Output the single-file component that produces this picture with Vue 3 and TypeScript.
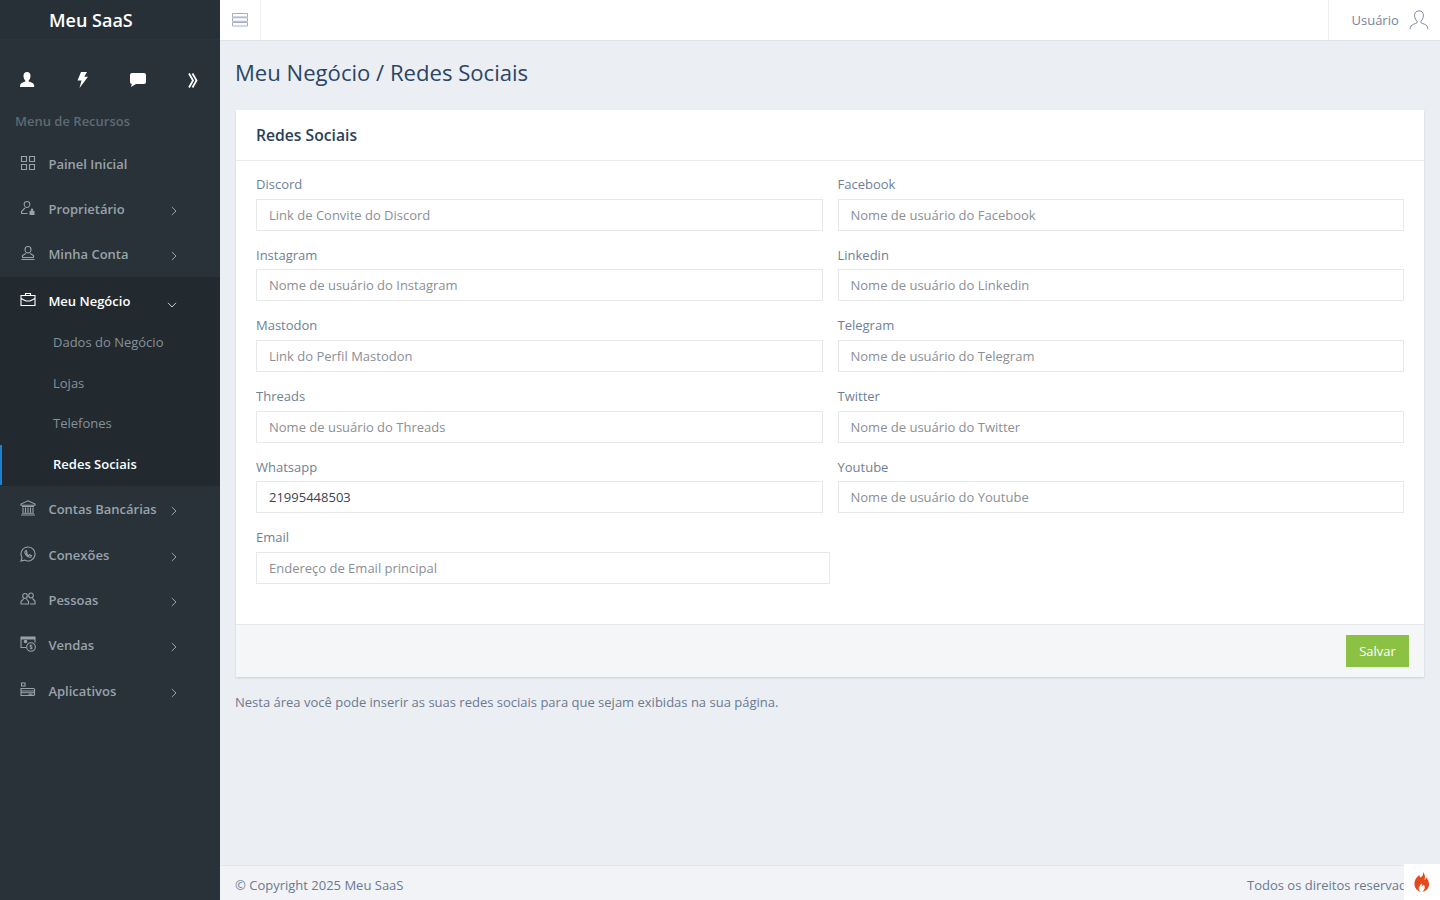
<script setup lang="ts">
interface Field { label: string; placeholder: string; value?: string }
const fields: Field[] = [
  { label: 'Discord', placeholder: 'Link de Convite do Discord' },
  { label: 'Facebook', placeholder: 'Nome de usuário do Facebook' },
  { label: 'Instagram', placeholder: 'Nome de usuário do Instagram' },
  { label: 'Linkedin', placeholder: 'Nome de usuário do Linkedin' },
  { label: 'Mastodon', placeholder: 'Link do Perfil Mastodon' },
  { label: 'Telegram', placeholder: 'Nome de usuário do Telegram' },
  { label: 'Threads', placeholder: 'Nome de usuário do Threads' },
  { label: 'Twitter', placeholder: 'Nome de usuário do Twitter' },
  { label: 'Whatsapp', placeholder: '', value: '21995448503' },
  { label: 'Youtube', placeholder: 'Nome de usuário do Youtube' }
]
const menuTop = [
  { name: 'Painel Inicial', icon: 'grid', arrow: false },
  { name: 'Proprietário', icon: 'userlock', arrow: true },
  { name: 'Minha Conta', icon: 'user', arrow: true }
]
const menuBottom = [
  { name: 'Contas Bancárias', icon: 'bank', arrow: true },
  { name: 'Conexões', icon: 'whats', arrow: true },
  { name: 'Pessoas', icon: 'people', arrow: true },
  { name: 'Vendas', icon: 'money', arrow: true },
  { name: 'Aplicativos', icon: 'apps', arrow: true }
]
const subs = ['Dados do Negócio', 'Lojas', 'Telefones', 'Redes Sociais']
const paths: Record<string, string> = {
  grid: 'M1.500 1.500h5v5h-5zM9.500 1.500h5v5h-5zM1.500 9.500h5v5h-5zM9.500 9.500h5v5h-5z',
  user: 'M8 1.500a3 3 0 0 1 3 3c0 1.600-1.300 3.400-3 3.400S5 6.100 5 4.500a3 3 0 0 1 3-3zM5.800 8.500 2.500 10.500v2h11v-2L10.200 8.500M1.500 14.500h13',
  userlock: 'M7 1.500a2.800 2.800 0 0 1 2.800 2.800C9.800 5.900 8.600 7.500 7 7.500S4.200 5.900 4.200 4.300A2.800 2.800 0 0 1 7 1.500zM5 8 1.500 11.500v2h6',
  bank: 'M8 .8 15 4v1.200H1V4zM2 6.500h12M3 7.500v5M5.500 7.500v5M8 7.500v5M10.500 7.500v5M13 7.500v5M2 13.200h12M1 15h14',
  whats: 'M8 1a7 7 0 0 0-6 10.500L1 15l3.600-.9A7 7 0 1 0 8 1zM5.500 4.800c-.8.700-.9 1.900 0 3.400 1 1.600 2.400 2.800 4 3 1 .1 1.800-.5 2-1.400l-2-1-.8.900c-1-.4-1.900-1.300-2.400-2.400l.8-.8-.8-2z',
  people: 'M5 2.500a2.300 2.300 0 0 1 2.300 2.300C7.300 6.300 6.300 7.500 5 7.500S2.700 6.300 2.700 4.800A2.300 2.300 0 0 1 5 2.500zM3.500 8 1 10.500v2.500h7.500v-2.500L6.500 8M11 2a2.300 2.300 0 0 1 2.300 2.300c0 1.500-1 2.700-2.300 2.700S8.700 5.800 8.700 4.300A2.300 2.300 0 0 1 11 2zM12.500 7.500 15 10v3h-5',
  apps: 'M1.500 1h3.500v3H1.500zM1 6.500h12.500a1 1 0 0 1 1 1v5a1 1 0 0 1-1 1H1zM1 9h13.500M1 10.800h13.500M8.500 12.200h4'
}
</script>

<template>
  <div class="shell">
    <aside class="side">
      <div class="brand">Meu SaaS</div>
      <div class="quick">
        <svg width="16" height="16" viewBox="0 0 16 16"><path d="M8 0c2.400 0 3.700 1.800 3.500 4.200-.1 1.700-.9 3.400-1.800 4.200v1.200c2 .8 4.800 1.400 5.300 3.200.2.700.2 1.900.2 2.200H1c0-.6 0-1.500.2-2.200.5-1.800 3.300-2.400 5.100-3.200V8.400C5.400 7.600 4.600 5.900 4.500 4.200 4.300 1.800 5.600 0 8 0z" fill="#fff"/></svg>
        <svg width="12" height="16" viewBox="0 0 12 16"><path d="M5 0h6L8.300 4.800H12L3.500 16 5.500 8.500H1.500z" fill="#fff"/></svg>
        <svg width="16" height="14" viewBox="0 0 16 14"><path d="M2 0h12a2 2 0 0 1 2 2v7a2 2 0 0 1-2 2H6l-5 3 .8-3A2 2 0 0 1 0 9V2a2 2 0 0 1 2-2z" fill="#fff"/></svg>
        <svg width="10" height="15" viewBox="0 0 10 15"><path d="M1 .5 5 7.500l-4 7M4.500 .5 8.500 7.500l-4 7" fill="none" stroke="#fff" stroke-width="1.800"/></svg>
      </div>
      <div class="section">Menu de Recursos</div>
      <a v-for="m in menuTop" :key="m.name" class="item">
        <svg class="ico" width="16" height="16" viewBox="0 0 16 16" fill="none" stroke="currentColor"><path :d="paths[m.icon]"/><path v-if="m.icon === 'userlock'" d="M9.500 11h5v4h-5zM10.800 11V9.800a1.200 1.200 0 0 1 2.400 0V11" fill="currentColor" stroke="none"/></svg>
        <span class="name">{{ m.name }}</span>
        <svg v-if="m.arrow" class="chev" width="6" height="10" viewBox="0 0 6 10"><path d="M.8 1 5 5 .8 9" fill="none" stroke="currentColor"/></svg>
      </a>
      <div class="group">
        <a class="item open">
          <svg class="ico" width="16" height="16" viewBox="0 0 16 16" fill="none" stroke="currentColor"><path d="M1 3.500h14v10H1zM5.500 3.500V1.500h5v2M1 6.500 6 9h4l5-2.500"/></svg>
          <span class="name">Meu Negócio</span>
          <svg class="chev down" width="10" height="6" viewBox="0 0 10 6"><path d="M1 .8 5 5 9 .8" fill="none" stroke="currentColor"/></svg>
        </a>
        <a v-for="s in subs" :key="s" class="sub" :class="{ on: s === 'Redes Sociais' }">{{ s }}</a>
      </div>
      <a v-for="m in menuBottom" :key="m.name" class="item">
        <svg v-if="m.icon !== 'money'" class="ico" width="16" height="16" viewBox="0 0 16 16" fill="none" stroke="currentColor"><path :d="paths[m.icon]"/></svg>
        <svg v-else class="ico" width="16" height="16" viewBox="0 0 16 16" fill="none" stroke="currentColor"><path d="M6 11.500H1V1h14v5.500"/><path d="M1 1h14v2.500H1z" fill="currentColor" stroke="none"/><circle cx="5.500" cy="5.500" r="1.800" fill="currentColor" stroke="none"/><circle cx="11" cy="11" r="4.300"/><path d="M12.300 9.300h-2v1.700h1.500v1.700H9.700"/></svg>
        <span class="name">{{ m.name }}</span>
        <svg class="chev" width="6" height="10" viewBox="0 0 6 10"><path d="M.8 1 5 5 .8 9" fill="none" stroke="currentColor"/></svg>
      </a>
    </aside>

    <div class="main">
      <header class="top">
        <button class="burger">
          <svg width="16" height="14" viewBox="0 0 16 14" fill="none" stroke="#a6aec4"><path d="M.5.500h15v3.500H.5zM.5 4.800h15v3.500H.5zM.5 9.500h15v3.500H.5z"/></svg>
        </button>
        <div class="userbox">
          <span>Usuário</span>
          <svg width="20" height="20" viewBox="0 0 20 20" fill="none" stroke="#7f8aa1"><path d="M10 .8c3 0 4.600 2.200 4.400 5-.2 2.300-1.200 4.300-2.400 5.400v1.600c1.800.8 4.800 1.700 6 3.200.5.700.8 1.900.9 3.200M10 .8c-3 0-4.600 2.200-4.400 5 .2 2.300 1.200 4.300 2.400 5.400v1.600c-1.800.8-4.800 1.700-6 3.200-.5.700-.8 1.900-.9 3.200"/></svg>
        </div>
      </header>

      <div class="content">
        <h1>Meu Negócio / Redes Sociais</h1>
        <section class="card">
          <div class="card-head">Redes Sociais</div>
          <div class="card-body">
            <div class="grid">
              <div v-for="f in fields" :key="f.label" class="field">
                <label>{{ f.label }}</label>
                <input type="text" :placeholder="f.placeholder" :value="f.value ?? ''" />
              </div>
            </div>
            <div class="field half">
              <label>Email</label>
              <input type="text" placeholder="Endereço de Email principal" />
            </div>
          </div>
          <div class="card-foot"><button class="save">Salvar</button></div>
        </section>
        <p class="note">Nesta área você pode inserir as suas redes sociais para que sejam exibidas na sua página.</p>
      </div>

      <footer class="foot">
        <span>© Copyright 2025 Meu SaaS</span>
        <span class="rights">Todos os direitos reservados</span>
        <div class="fire">
          <svg width="16" height="20" viewBox="0 0 16 20"><path d="M9 0c.6 2.600-.6 4-2.200 5.600C5.800 4.800 5.400 4 5.400 3 2.400 5.200.4 8.200.4 11.600.4 16.200 3.400 19.200 7 20c-1.800-1.200-2.600-2.800-2.200-4.400.4-1.600 1.800-2.400 2.600-4 .8 1 1 1.800.8 2.600.8-.2 1.200-1 1.200-1.800 1 1 1.600 2 1.400 3.400-.2 1.800-1.400 3-2.600 4 3.800-.6 6.800-3.400 6.800-7.600 0-3-1.400-4.800-2.800-6.600-.2 1.200-.6 2-1.600 2.600C11.200 5.400 11.400 2.400 9 0z" fill="#e4491c"/></svg>
        </div>
      </footer>
    </div>
  </div>
</template>

<style>
html, body { margin: 0; padding: 0; }
</style>

<style scoped>
* { box-sizing: border-box; }
.shell {
  display: flex;
  width: 1440px;
  height: 900px;
  overflow: hidden;
  font-family: "Open Sans", "Noto Sans", sans-serif;
  font-size: 13px;
  color: #6b7a90;
  background: #ebeef3;
}
.side {
  width: 220px;
  flex: none;
  background: #293239;
  display: flex;
  flex-direction: column;
}
.brand {
  height: 40px;
  line-height: 40px;
  padding-left: 49px;
  font-size: 18px;
  font-weight: 600;
  color: #fff;
  background: #273037;
  border-bottom: 1px solid #2b353c;
}
.quick {
  height: 60px;
  padding-top: 20px;
  display: grid;
  grid-template-columns: 54.500px 55.500px 55.500px 55px;
  align-items: center;
  justify-items: center;
}
.section {
  height: 41.1px;
  padding: 12px 0 0 15px;
  line-height: 18px;
  color: #5d6a75;
  font-weight: 600;
}
.item {
  position: relative;
  display: flex;
  align-items: center;
  height: 45.33px;
  padding-left: 20px;
  color: #98a2aa;
  font-weight: 600;
}
.ico { flex: none; margin-top: -2px; stroke-width: 1.1; }
.name { margin-left: 12.4px; }
.chev { position: absolute; left: 171px; top: 19.5px; }
.group { background: #222a30; height: 209px; margin-bottom: 0.75px; }
.item.open { height: 44.8px; color: #fff; padding-top: 3px; }
.chev.down { left: 167px; top: 24.5px; color: #c8ced3; }
.sub {
  display: block;
  height: 40.67px;
  line-height: 40.67px;
  padding-left: 53px;
  color: #86919a;
  font-weight: 400;
}
.sub.on {
  color: #fff;
  font-weight: 600;
  border-left: 2px solid #1a82d6;
  padding-left: 51px;
  margin-top: 0.9px;
  height: 39.77px;
  line-height: 38.87px;
}
.main { flex: 1; min-width: 0; display: flex; flex-direction: column; }
.top {
  height: 41px;
  flex: none;
  background: #fff;
  border-bottom: 1px solid #dfe2e7;
  display: flex;
  justify-content: space-between;
}
.burger {
  width: 41px;
  padding: 0;
  background: none;
  border: 0;
  border-right: 1px solid #edeff2;
  display: flex;
  align-items: center;
  justify-content: center;
}
.userbox {
  width: 112px;
  border-left: 1px solid #edeff2;
  display: flex;
  align-items: center;
  gap: 10px;
  padding-left: 22.5px;
  color: #76849b;
}
.content { flex: 1; padding: 0 15px; min-height: 0; }
h1 {
  margin: 0;
  padding-top: 14px;
  height: 69px;
  font-size: 22.1px;
  line-height: 34px;
  font-weight: 400;
  color: #2b4565;
}
.card {
  background: #fff;
  width: 1188px;
  height: 567px;
  margin-left: 1px;
  display: flex;
  flex-direction: column;
  box-shadow: 0 1px 2px rgba(0, 0, 0, .14);
}
.card-head {
  height: 51px;
  flex: none;
  padding-left: 20px;
  line-height: 50px;
  font-size: 15.7px;
  font-weight: 600;
  color: #2a3f57;
  border-bottom: 1px solid #e9ebef;
}
.card-body { flex: 1; padding: 14px 20px 0; }
.grid {
  display: grid;
  grid-template-columns: 1fr 1fr;
  column-gap: 15px;
}
.field { height: 70.67px; }
.field.half { width: 574px; }
label {
  display: block;
  height: 19px;
  line-height: 19px;
  color: #6f7f97;
}
input {
  display: block;
  width: 100%;
  height: 32px;
  margin-top: 4.6px;
  padding: 0 12px;
  border: 1px solid #e6e8ec;
  border-radius: 0;
  outline: 0;
  background: #fff;
  font: 13px "Open Sans", sans-serif;
  color: #3a4452;
}
input::placeholder { color: #8b8f96; opacity: 1; }
.card-foot {
  height: 53px;
  flex: none;
  background: #f5f6f8;
  border-top: 1px solid #e4e6e9;
  padding: 10px 15px 0 0;
  display: flex;
  justify-content: flex-end;
  align-items: flex-start;
}
.save {
  width: 63px;
  height: 32px;
  padding: 0;
  border: 0;
  background: #8bc243;
  color: #fff;
  font: 13px "Open Sans", sans-serif;
}
.note { margin: 16px 0 0; line-height: 18px; color: #6b7a90; }
.foot {
  position: relative;
  height: 35px;
  flex: none;
  display: flex;
  justify-content: space-between;
  padding: 10px 0 0 15px;
  line-height: 18px;
  background: #f1f3f7;
  border-top: 1px solid #e2e5ea;
  color: #6b7a90;
  white-space: nowrap;
}
.rights { margin-right: 19px; }
.fire {
  position: absolute;
  right: 0;
  bottom: 0;
  width: 36px;
  height: 36px;
  background: #fff;
  display: flex;
  align-items: center;
  justify-content: center;
}
</style>
